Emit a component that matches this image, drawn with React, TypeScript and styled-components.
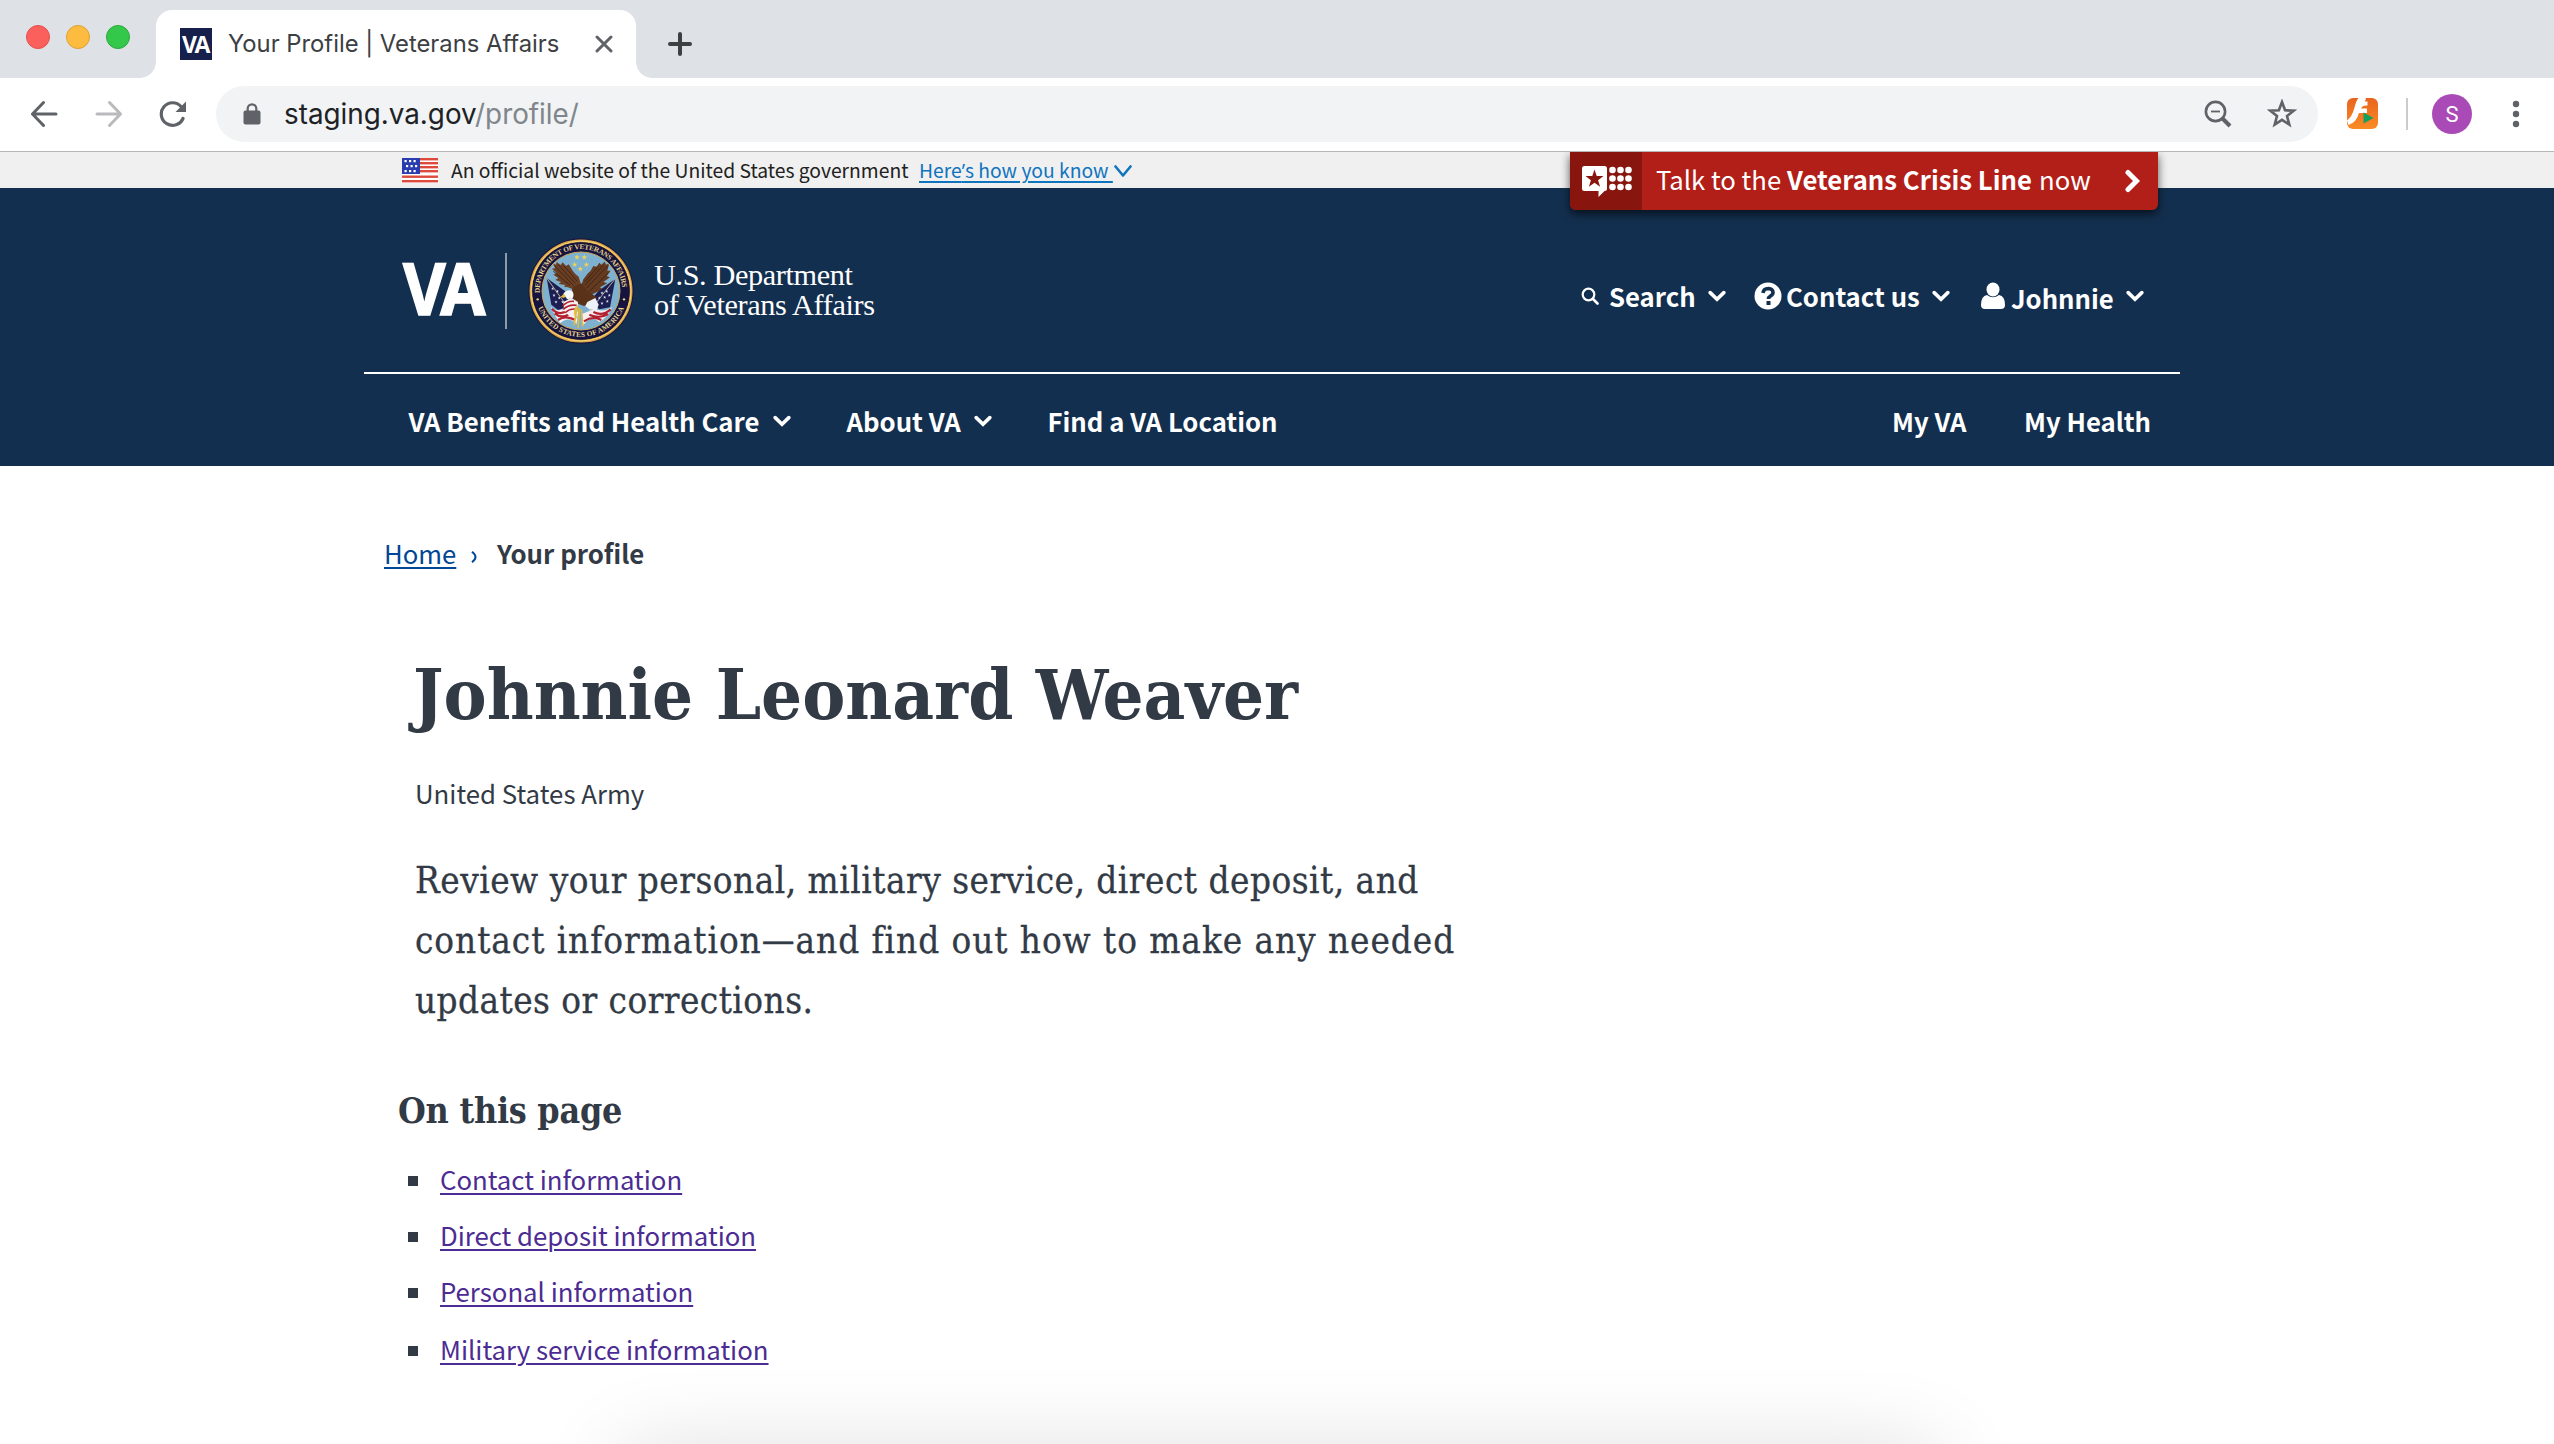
import React from "react";
import styled, { createGlobalStyle, css } from "styled-components";

const SANS = `"Noto Sans CJK SC", "Open Sans", sans-serif`;
const SLAB = `"DejaVu Serif Condensed", "DejaVu Serif", serif`;
const UI = `Inter, Roboto, sans-serif`;
const NAVY = "#132f4f";

const Global = createGlobalStyle`
  * { box-sizing: border-box; }
  html, body { margin: 0; padding: 0; background: #fff; }
  body { height: 1444px; overflow: hidden; font-family: ${SANS}; color: #323a45; }
  ul, h1, h2, p { margin: 0; padding: 0; }
  svg { display: block; flex: none; }
`;

const Label = styled.span<{ $w: number; $size: number; $bold?: boolean; $ls?: number; $sx?: number }>`
  display: inline-block;
  flex: none;
  white-space: pre;
  width: ${(p) => p.$w}px;
  font-size: ${(p) => p.$size}px;
  font-weight: ${(p) => (p.$bold ? 700 : 400)};
  letter-spacing: ${(p) => p.$ls ?? 0}px;
  ${(p) => p.$sx && css`transform: scaleX(${p.$sx}); transform-origin: 0 50%;`}
`;
const LinkLabel = styled(Label)`
  text-decoration: underline 2px;
  text-underline-offset: 3px;
`;

const Page = styled.div`
  position: relative;
  width: 2554px;
  height: 1444px;
  overflow: hidden;
  background: #fff;
`;

/* ---------- browser chrome ---------- */
const TabStrip = styled.div`
  height: 78px;
  background: #dee1e6;
  display: flex;
  padding: 10px 0 0 26px;
`;
const Lights = styled.div`
  display: flex;
  gap: 16px;
  padding-top: 15px;
  width: 130px;
`;
const Light = styled.i<{ $c: string; $b: string }>`
  width: 24px;
  height: 24px;
  border-radius: 50%;
  background: ${(p) => p.$c};
  border: 1px solid ${(p) => p.$b};
`;
const Tab = styled.div`
  position: relative;
  width: 480px;
  height: 68px;
  background: #fff;
  border-radius: 16px 16px 0 0;
  display: flex;
  align-items: center;
  padding: 0 23px 0 24px;
  color: #3c4043;
  font-family: ${UI};
  line-height: 40px;
  &::before, &::after {
    content: "";
    position: absolute;
    bottom: 0;
    width: 16px;
    height: 16px;
  }
  &::before { left: -16px; background: radial-gradient(circle at 0 0, transparent 15.5px, #fff 16px); }
  &::after { right: -16px; background: radial-gradient(circle at 100% 0, transparent 15.5px, #fff 16px); }
`;
const Favicon = styled.span`
  width: 32px;
  height: 32px;
  margin-right: 16px;
  background: #171f4c;
  color: #fff;
  font: 700 23px/33px "Open Sans", sans-serif;
  letter-spacing: -2.5px;
  text-align: center;
  padding-right: 2px;
`;
const PushRight = styled.span`margin-left: auto;`;
const NewTab = styled.div`padding: 22px 0 0 32px;`;

const Toolbar = styled.div`
  height: 74px;
  border-bottom: 1px solid #b5b7b7;
  display: flex;
  align-items: center;
  padding: 0 0 2px 31px;
  color: #5f6368;
`;
const NavButtons = styled.div`display: flex; gap: 36px;`;
const Omnibox = styled.div`
  width: 2102px;
  height: 56px;
  margin: 0 29px 0 29px;
  border-radius: 28px;
  background: #f1f3f4;
  display: flex;
  align-items: center;
  padding: 0 21px 0 27px;
  font-family: ${UI};
  line-height: 40px;
  color: #202124;
`;
const Url = styled.span`margin-left: 23px; display: flex;`;
const OmniActions = styled.span`
  display: flex;
  align-items: center;
  gap: 35px;
  margin-left: auto;
`;
const UrlPath = styled.span`color: #80868b;`;
const Divider = styled.i`width: 2px; height: 32px; background: #ccc; margin: 0 24px 0 28px;`;
const Avatar = styled.span`
  width: 40px;
  height: 40px;
  margin-right: 40px;
  border-radius: 50%;
  background: #a94ab7;
  color: #fff;
  font: 400 22px/41px Roboto, sans-serif;
  text-align: center;
`;

/* ---------- gov banner + crisis line ---------- */
const Banner = styled.div`
  height: 36px;
  background: #f0f0f0;
  display: flex;
  padding-left: 402px;
  line-height: 36px;
  color: #212121;
`;
const FlagBox = styled.span`padding-top: 6px; margin-right: 13px;`;
const BannerLink = styled.a`
  margin-left: 10px;
  color: #0f74be;
`;
const Apostrophe = styled.span`font-family: "Open Sans", sans-serif;`;
const BannerArrow = styled.span`padding-top: 13px;`;
const Crisis = styled.a`
  position: absolute;
  left: 1570px;
  top: 152px;
  width: 588px;
  height: 58px;
  display: flex;
  align-items: center;
  overflow: hidden;
  border-radius: 0 0 6px 6px;
  background: #b21e18;
  color: #fff;
  line-height: 54px;
`;
const CrisisShadow = styled.div`
  position: absolute;
  left: 1570px;
  top: 152px;
  width: 588px;
  height: 58px;
  border-radius: 0 0 6px 6px;
  box-shadow: 0 4px 10px rgba(0, 0, 0, 0.65);
  clip-path: inset(0 -30px -30px -30px);
`;
const CrisisIcon = styled.span`
  width: 72px;
  height: 58px;
  margin-right: 14px;
  padding: 14px 0 0 12px;
  background: #88160f;
`;
const CrisisText = styled.span`
  display: flex;
  width: 469px;
  padding-bottom: 4px;
`;

/* ---------- site header ---------- */
const SiteHeader = styled.header`
  height: 278px;
  background: ${NAVY};
  color: #fff;
  padding: 0 374px 0 364px;
`;
const HeaderTop = styled.div`
  height: 186px;
  border-bottom: 2px solid #fff;
  display: flex;
  padding-left: 38px;
`;
const Wordmark = styled.div`
  height: 76px;
  width: 105px;
  margin-top: 65px;
  padding-left: 1px;
  border-right: 2px solid #8d9bab;
  line-height: 70px;
  font-family: "Open Sans", sans-serif;
  -webkit-text-stroke: 1.5px #fff;
`;
const SealBox = styled.div`margin: 49.5px 20px 0 21px;`;
const DeptName = styled.div`
  display: flex;
  flex-direction: column;
  width: 230px;
  padding-top: 72px;
  font-family: "Liberation Serif", serif;
  line-height: 30px;
`;
const Tools = styled.div`
  display: flex;
  margin-left: auto;
  padding: 90px 36px 0 0;
  line-height: 36px;
`;
const Tool = styled.div<{ $ml?: number; $gap: number; $dy?: number }>`
  display: flex;
  height: 36px;
  align-items: center;
  margin-left: ${(p) => p.$ml ?? 0}px;
  gap: ${(p) => p.$gap}px;
  > span { padding-top: ${(p) => p.$dy ?? 0}px; }
`;
const Nav = styled.nav`
  display: flex;
  height: 92px;
  padding: 28.5px 29px 0 44.5px;
  line-height: 36px;
`;
const NavItem = styled.div<{ $ml?: number }>`
  display: flex;
  gap: 13px;
  height: 36px;
  align-items: center;
  margin-left: ${(p) => p.$ml ?? 0}px;
`;
const NavRight = styled.div`display: flex; margin-left: auto;`;

/* ---------- content ---------- */
const Main = styled.main`padding: 67px 0 0 384px;`;
const Crumbs = styled.div`
  display: flex;
  height: 40px;
  line-height: 40px;
  a { color: #004795; }
  svg { margin: 18px 20px 0 15px; }
`;
const Title = styled.h1`
  margin: 82px 0 0 28.5px;
  height: 80px;
  line-height: 80px;
  font-family: ${SLAB};
`;
const Branch = styled.p`margin: 38px 0 0 31px; height: 40px; line-height: 40px;`;
const Intro = styled.p`
  margin: 38px 0 0 31px;
  display: flex;
  flex-direction: column;
  font-family: ${SLAB};
  line-height: 60.2px;
  -webkit-text-stroke: 0.3px #323a45;
`;
const SubTitle = styled.h2`
  margin: 55.5px 0 0 14px;
  height: 48px;
  line-height: 48px;
  font-family: ${SLAB};
`;
const List = styled.ul`
  list-style: none;
  margin: 23.5px 0 0 24px;
  display: flex;
  flex-direction: column;
  gap: 16px;
  line-height: 40px;
`;
const Item = styled.li`
  display: flex;
  height: 40px;
  &:last-child { margin-top: 2px; }
  &::before {
    content: "";
    width: 10px;
    height: 10px;
    margin: 17px 22px 0 0;
    background: #323a45;
  }
  a { color: #4c2c92; }
`;
const DockShadow = styled.div`
  position: absolute;
  left: 622px;
  top: 1452px;
  width: 1316px;
  height: 200px;
  box-shadow: 0 0 90px rgba(0, 0, 0, 0.14);
`;

const Caret = () => (
  <svg width="18" height="12" viewBox="0 0 18 12">
    <path d="M2.2 2.6 9 9.2l6.8-6.6" fill="none" stroke="#fff" strokeWidth="3.6" strokeLinecap="round" />
  </svg>
);

const Flag = () => (
  <svg width="36" height="25" viewBox="0 0 36 25">
    <rect width="36" height="25" fill="#fff" />
    {[0, 4, 8, 12, 17.5, 22].map((y) => <rect key={y} y={y} width="36" height="2.4" fill="#dd4a3c" />)}
    <rect width="18" height="16" fill="#2a3db0" />
    {[2, 7, 12].map((y, r) => [2.5, 7, 11.5].map((x) => (
      <rect key={`${x}-${y}`} x={x + (r === 1 ? 1.5 : 0)} y={y} width="2.2" height="2.2" fill="#fff" />
    )))}
  </svg>
);

const star = (cx: number, cy: number, r: number, k = 0.4) =>
  Array.from({ length: 10 }, (_, i) => {
    const a = -Math.PI / 2 + (i * Math.PI) / 5;
    const q = i % 2 ? r * k : r;
    return `${(cx + q * Math.cos(a)).toFixed(1)},${(cy + q * Math.sin(a)).toFixed(1)}`;
  }).join(" ");

const Seal = () => (
  <svg width="106" height="106" viewBox="0 0 318 318">
    <defs>
      <path id="arcTop" d="M36.1 169 A123.500 123.500 0 1 1 281.900 169" />
      <path id="arcBottom" d="M26 198 A139 139 0 0 0 292 198" />
      <clipPath id="disc"><circle cx="159" cy="159" r="115" /></clipPath>
    </defs>
    <circle cx="159" cy="159" r="158" fill="#1a1640" />
    <circle cx="159" cy="159" r="150" fill="none" stroke="#d9a441" strokeWidth="9" />
    <circle cx="159" cy="159" r="150" fill="none" stroke="#f5d77c" strokeWidth="3" />
    <circle cx="159" cy="159" r="146" fill="#16133f" />
    <circle cx="159" cy="159" r="117" fill="#7db1cf" stroke="#c9a85c" strokeWidth="3" />
    <g fill="#e6d48c" fontFamily="Liberation Serif, serif" fontWeight="700" fontSize="22">
      <text><textPath href="#arcTop" startOffset="4" textLength="388">DEPARTMENT OF VETERANS AFFAIRS</textPath></text>
      <text><textPath href="#arcBottom" startOffset="12" textLength="330">UNITED STATES OF AMERICA</textPath></text>
    </g>
    <circle cx="29" cy="184" r="3.500" fill="#e6d48c" />
    <circle cx="288" cy="184" r="3.500" fill="#e6d48c" />
    <g clipPath="url(#disc)">
      {[[147, 58], [169, 58], [140, 80], [175, 80], [157, 93]].map(([x, y]) => (
        <polygon key={`${x}${y}`} points={star(x, y, 9)} fill="#ecd25a" />
      ))}
      <path d="M56 120 L112 160 L126 204 L90 216 L70 200 Z" fill="#1d1f52" />
      <path d="M262 122 L212 158 L186 190 L214 214 L246 208 Z" fill="#1d1f52" />
      <path d="M56 120 L150 250 M262 122 L160 250" stroke="#d8c9a0" strokeWidth="2.500" />
      {[[74, 152], [88, 160], [78, 172], [94, 180], [84, 192], [104, 192], [222, 165], [236, 160], [214, 180], [230, 178], [244, 172], [222, 196], [238, 190]].map(([x, y]) => (
        <polygon key={`s${x}${y}`} points={star(x, y, 5)} fill="#dfe6f2" />
      ))}
      <path d="M68 206 Q90 226 118 208 L150 222 L146 258 Q122 232 96 256 Q82 236 68 206Z" fill="#f4eef0" />
      <path d="M252 208 Q226 224 200 212 L162 228 L166 262 Q188 228 214 252 Q240 238 252 208Z" fill="#f4eef0" />
      <path d="M72 212 Q94 236 122 216 M80 226 Q100 244 128 226 M90 246 Q112 230 142 246 M248 214 Q224 236 196 222 M240 228 Q214 244 184 230 M220 246 Q194 232 168 250" fill="none" stroke="#b3202f" strokeWidth="6.500" />
      <path d="M72 74 L84 80 L86 72 L98 81 L104 73 L114 84 L122 79 L134 98 L142 108 L152 116 L158 136 L146 158 L120 148 L108 146 L112 141 L92 138 L99 132 L82 126 L91 120 L76 110 L86 106 L72 92 L82 90Z" fill="#6b3f24" />
      <path d="M244 76 L234 80 L230 71 L220 80 L214 74 L206 86 L196 84 L188 98 L180 106 L166 124 L158 148 L164 172 L190 170 L214 158 L222 152 L216 148 L238 136 L226 132 L246 118 L236 114 L248 98 L238 98Z" fill="#643a20" />
      <path d="M80 84 L136 142 M90 80 L142 136 M76 100 L126 142 M106 82 L148 130 M238 84 L176 150 M226 82 L172 140 M242 104 L184 160 M210 86 L170 132" stroke="#3c2010" strokeWidth="2.500" />
      <path d="M136 146 L160 136 L178 158 L206 178 L196 196 L168 204 L142 194 L126 170Z" fill="#5a3119" />
      <path d="M178 192 L202 180 L212 200 L206 216 L184 214 L172 204Z" fill="#eef3fa" />
      <path d="M106 168 Q114 154 132 158 Q140 168 134 180 L116 184 Q118 176 106 176Z" fill="#f7fafc" />
      <path d="M108 167 L98 176 L106 180 L114 176Z" fill="#e4bd3c" />
      <path d="M106 192 L130 180 L150 192 L148 224 L128 238 L108 218Z" fill="#f6efef" />
      <path d="M104 204 Q120 188 138 190 M106 214 Q122 198 146 202 M112 224 Q126 210 148 214" fill="none" stroke="#b3202f" strokeWidth="5" />
      <path d="M148 204 L138 262 M154 210 L150 270 M160 214 L164 266 M144 208 Q136 226 146 240" fill="none" stroke="#e2bb3a" strokeWidth="5" />
    </g>
  </svg>
);

const LINKS: [string, number][] = [
  ["Contact information", 242],
  ["Direct deposit information", 316],
  ["Personal information", 253],
  ["Military service information", 329],
];

export default function App() {
  return (
    <Page>
      <Global />
      <TabStrip>
        <Lights>
          <Light $c="#fc605c" $b="#e2504b" />
          <Light $c="#fdbc40" $b="#dfa033" />
          <Light $c="#34c84a" $b="#2aa83a" />
        </Lights>
        <Tab>
          <Favicon>VA</Favicon>
          <Label $w={331} $size={23.8}>Your Profile | Veterans Affairs</Label>
          <PushRight>
            <svg width="18" height="18" viewBox="0 0 18 18"><path d="M2 2 16 16M16 2 2 16" stroke="#5f6368" strokeWidth="3" strokeLinecap="round" /></svg>
          </PushRight>
        </Tab>
        <NewTab>
          <svg width="24" height="24" viewBox="0 0 24 24"><path d="M12 2V22M2 12H22" stroke="#3c4043" strokeWidth="4" strokeLinecap="round" /></svg>
        </NewTab>
      </TabStrip>

      <Toolbar>
        <NavButtons>
          <svg width="28" height="28" viewBox="0 0 28 28"><path d="M25 14H2M12.500 2.500 1.500 14 12.500 25.500" fill="none" stroke="#5f6368" strokeWidth="3" strokeLinecap="round" strokeLinejoin="round" /></svg>
          <svg width="28" height="28" viewBox="0 0 28 28"><path d="M2 14H25M14.500 2.500 25.500 14 14.500 25.500" fill="none" stroke="#bababd" strokeWidth="3" strokeLinecap="round" strokeLinejoin="round" /></svg>
          <svg width="28" height="28" viewBox="0 0 28 28">
            <path d="M24 18.500A11.300 11.300 0 1 1 22 6.500" fill="none" stroke="#5f6368" strokeWidth="3.200" strokeLinecap="round" />
            <path d="M27 1.500V12H16.500Z" fill="#5f6368" />
          </svg>
        </NavButtons>
        <Omnibox>
          <svg width="18" height="22" viewBox="0 0 18 22"><rect x="0.500" y="7.500" width="17" height="14" rx="2" fill="#5f6368" /><path d="M4.700 9V5.600a4.300 4.300 0 0 1 8.600 0V9" fill="none" stroke="#5f6368" strokeWidth="2.200" /></svg>
          <Url><Label $w={294} $size={27.8}>staging.va.gov<UrlPath>/profile/</UrlPath></Label></Url>
          <OmniActions>
            <svg width="28" height="28" viewBox="0 0 28 28">
              <circle cx="11.500" cy="11.500" r="9.600" fill="none" stroke="#5f6368" strokeWidth="2.600" />
              <path d="M7 11.500h9" stroke="#5f6368" strokeWidth="1.800" /><path d="m18.500 18.500 7.500 7.500" stroke="#5f6368" strokeWidth="4" />
            </svg>
            <svg width="30" height="30" viewBox="0 0 30 30"><polygon points={star(15, 15.5, 12.5, 0.42)} fill="none" stroke="#5f6368" strokeWidth="2.600" /></svg>
          </OmniActions>
        </Omnibox>
        <svg width="31" height="31" viewBox="0 0 31 31">
          <defs><linearGradient id="fl" x1="0" y1="0" x2="0" y2="1"><stop offset="0" stopColor="#e8641f" /><stop offset="1" stopColor="#fb8b24" /></linearGradient></defs>
          <rect width="31" height="31" rx="6" fill="url(#fl)" />
          <path d="M11.500 0H19l-1 3.500h2.500v4Q15.500 7 14 10.500h6V15h-8Q9.500 24.500 1.500 27L0 22.500Q5 19 7.500 9.500 9 3 11.500 0Z" fill="#fff" />
          <path d="M16.500 14.500v11l10-5.500Z" fill="#16a05d" />
        </svg>
        <Divider />
        <Avatar>S</Avatar>
        <svg width="8" height="28" viewBox="0 0 8 28"><circle cx="4" cy="4" r="3.200" fill="#5f6368" /><circle cx="4" cy="14" r="3.200" fill="#5f6368" /><circle cx="4" cy="24" r="3.200" fill="#5f6368" /></svg>
      </Toolbar>

      <Banner>
        <FlagBox><Flag /></FlagBox>
        <Label $w={458} $size={19.3}>An official website of the United States government</Label>
        <BannerLink><LinkLabel $w={195} $size={19.3}>Here<Apostrophe>’</Apostrophe>s how you know </LinkLabel></BannerLink>
        <BannerArrow>
          <svg width="18" height="13" viewBox="0 0 18 13"><path d="m1.500 1.500 7.500 9 7.500-9" fill="none" stroke="#0f74be" strokeWidth="2.600" strokeLinecap="round" strokeLinejoin="round" /></svg>
        </BannerArrow>
      </Banner>

      <SiteHeader>
        <HeaderTop>
          <Wordmark><Label $w={84} $size={71} $bold $ls={-6} $sx={0.925}>VA</Label></Wordmark>
          <SealBox><Seal /></SealBox>
          <DeptName>
            <Label $w={199} $size={30.3} $ls={-0.4}>U.S. Department</Label>
            <Label $w={222} $size={30.3} $ls={-0.37}>of Veterans Affairs</Label>
          </DeptName>
          <Tools>
            <Tool $gap={10}>
              <svg width="18" height="18" viewBox="0 0 18 18"><circle cx="7.500" cy="7.500" r="5.800" fill="none" stroke="#fff" strokeWidth="2.200" /><path d="m12 12 4.500 4.500" stroke="#fff" strokeWidth="2.600" strokeLinecap="round" /></svg>
              <Label $w={89} $size={25.7} $bold>Search</Label>
              <Caret />
            </Tool>
            <Tool $ml={28} $gap={4}>
              <svg width="28" height="28" viewBox="0 0 28 28"><circle cx="14" cy="14" r="13.500" fill="#fff" /><path d="M9 11q.5-4.500 5.300-4.500 4.700.3 4.700 4 0 2-2.500 3.500-2 1.200-2 3" fill="none" stroke={NAVY} strokeWidth="3.600" /><rect x="12.500" y="19" width="4" height="4" fill={NAVY} /></svg>
              <Label $w={142} $size={25.7} $bold>Contact us</Label>
              <Caret />
            </Tool>
            <Tool $ml={31} $gap={6} $dy={3}>
              <svg width="24" height="28" viewBox="0 0 24 28"><ellipse cx="12" cy="7.500" rx="6.500" ry="7" fill="#fff" /><path d="M6 13q6 4.500 12 0 6 1 6 10 0 4-4 4H4q-4 0-4-4 0-9 6-10Z" fill="#fff" /></svg>
              <Label $w={109} $size={25.7} $bold>Johnnie</Label>
              <Caret />
            </Tool>
          </Tools>
        </HeaderTop>
        <Nav>
          <NavItem><Label $w={351} $size={25.75} $bold>VA Benefits and Health Care</Label><Caret /></NavItem>
          <NavItem $ml={56}><Label $w={114} $size={25.75} $bold>About VA</Label><Caret /></NavItem>
          <NavItem $ml={56}><Label $w={229} $size={25.7} $bold>Find a VA Location</Label></NavItem>
          <NavRight>
            <NavItem><Label $w={75} $size={25.7} $bold>My VA</Label></NavItem>
            <NavItem $ml={57}><Label $w={127} $size={25.7} $bold>My Health</Label></NavItem>
          </NavRight>
        </Nav>
      </SiteHeader>
      <CrisisShadow />
      <Crisis>
        <CrisisIcon>
          <svg width="50" height="31" viewBox="0 0 50 31">
            <path d="M2.500 0h20Q25 0 25 2.500v20q0 2.500-2.500 2.500L16.500 31V25h-14Q0 25 0 22.500v-20Q0 0 2.500 0Z" fill="#fff" />
            <polygon points={star(12.5, 13, 9.5)} fill="#88160f" />
            {[4, 12.5, 21].map((y) => [30.5, 38.5, 46.5].map((x) => <circle key={`${x}${y}`} cx={x} cy={y} r="3.300" fill="#fff" />))}
          </svg>
        </CrisisIcon>
        <CrisisText>
          <Label $w={131} $size={25.7}>Talk to the </Label>
          <Label $w={252} $size={25.7} $bold>Veterans Crisis Line </Label>
          <Label $w={50} $size={25.7}>now</Label>
        </CrisisText>
        <svg width="16" height="24" viewBox="0 0 16 24"><path d="m3 3.500 8.500 8.500L3 20.500" fill="none" stroke="#fff" strokeWidth="5" strokeLinecap="round" /></svg>
      </Crisis>

      <Main>
        <Crumbs>
          <a><LinkLabel $w={72} $size={25.7}>Home</LinkLabel></a>
          <svg width="6" height="12" viewBox="0 0 6 12"><path d="M1 .8Q4.500 3.500 4.500 6T1 11.200" fill="none" stroke="#004795" strokeWidth="2" /></svg>
          <Label $w={147} $size={25.8} $bold>Your profile</Label>
        </Crumbs>
        <Title><Label $w={886} $size={69.5} $bold $sx={1.033}>Johnnie Leonard Weaver</Label></Title>
        <Branch><Label $w={228} $size={25.8}>United States Army</Label></Branch>
        <Intro>
          <Label $w={1003} $size={36.5} $ls={0.5}>Review your personal, military service, direct deposit, and</Label>
          <Label $w={1039} $size={36.5} $ls={0.95}>contact information—and find out how to make any needed</Label>
          <Label $w={398} $size={36.5} $ls={0.46}>updates or corrections.</Label>
        </Intro>
        <SubTitle><Label $w={223} $size={35.5} $bold $ls={-0.25}>On this page</Label></SubTitle>
        <List>
          {LINKS.map(([t, w]) => (
            <Item key={t}><a><LinkLabel $w={w} $size={25.75}>{t}</LinkLabel></a></Item>
          ))}
        </List>
      </Main>
      <DockShadow />
    </Page>
  );
}
